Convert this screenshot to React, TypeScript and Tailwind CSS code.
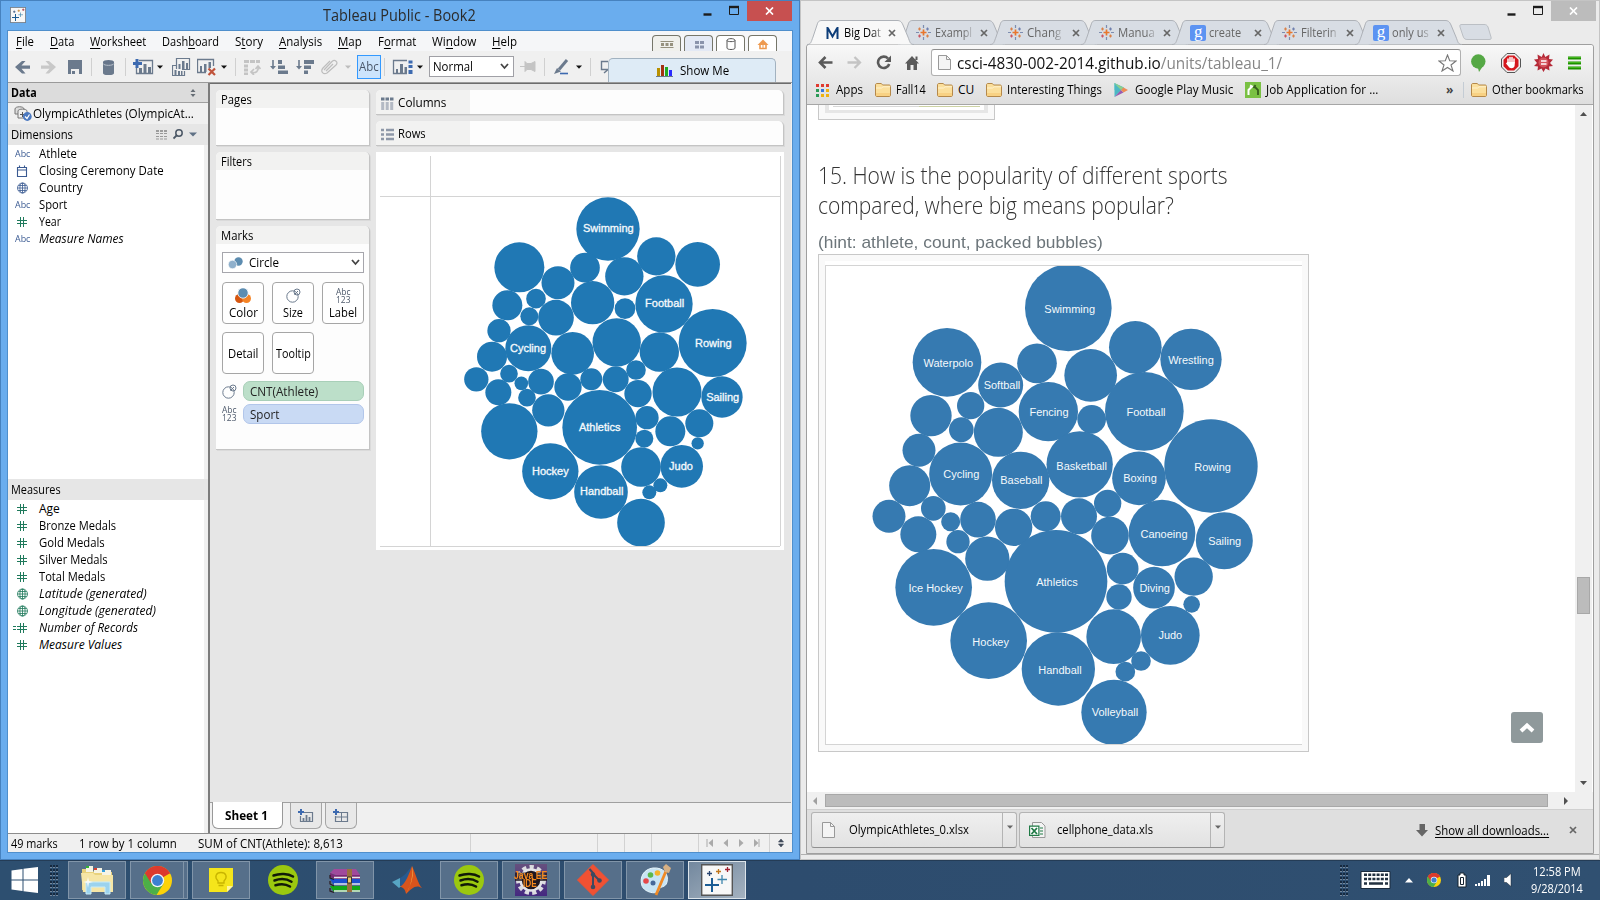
import { useLayoutEffect, useRef, useState } from "react";
import type { ReactNode } from "react";

/* One line of text condensed or widened to a given width. */
function T({ w, className = "", children }: { w: number; className?: string; children: ReactNode }) {
  const ref = useRef<HTMLSpanElement>(null);
  const [scale, setScale] = useState(1);
  useLayoutEffect(() => {
    if (ref.current) setScale(w / ref.current.offsetWidth);
  }, [w]);
  return (
    <span className={`block shrink-0 whitespace-nowrap ${className}`} style={{ width: w }}>
      <span ref={ref} className="inline-block origin-left" style={{ transform: `scaleX(${scale})` }}>
        {children}
      </span>
    </span>
  );
}

/* Drawing whose view box starts at x, y. */
function G({ x = 0, y = 0, w, h, className = "", children }: { x?: number; y?: number; w: number; h: number; className?: string; children: ReactNode }) {
  return (
    <svg width={w} height={h} viewBox={`${x} ${y} ${w} ${h}`} fill="none" className={`block shrink-0 ${className}`}>
      {children}
    </svg>
  );
}

type Bubble = [number, number, number, string?, number?, number?];

const leftBubbles: Bubble[] = [
  [474, 147, 95, "Swimming", 475, 145], [208, 262, 75], [324, 308, 49.5], [405, 263, 44.5], [523, 289, 57.5], [619, 229, 57.5],
  [743, 253, 67], [642, 372, 86, "Football", 644, 370], [428, 368, 65], [258, 356, 29.5], [238, 409, 27], [172, 376, 45],
  [318, 413, 53.5], [525, 386, 31], [788, 489, 102, "Rowing", 790, 490], [147, 452, 35], [126, 530, 45], [235, 505, 69, "Cycling", 234, 505],
  [368, 520, 64], [500, 487, 72.5], [628, 516, 59], [79, 598, 36.5], [145, 637, 39], [177, 581, 26.5], [214, 610, 20.5], [231, 653, 26.5],
  [273, 605, 38.5], [354, 621, 41], [295, 691, 48.5], [424, 598, 33], [497, 598, 39], [558, 570, 29.5], [564, 641, 41], [681, 636, 73.5],
  [816, 651, 62, "Sailing", 818, 652], [449, 742, 112, "Athletics", 449, 742], [178, 754, 84.5], [591, 713, 35], [583, 776, 27],
  [661, 754, 45], [748, 730, 42], [743, 790, 18.5], [573, 861, 59.5], [695, 859, 64, "Judo", 693, 859], [301, 874, 84.5, "Hockey", 301, 874],
  [453, 936, 80.5, "Handball", 455, 934], [598, 937, 21], [631, 916, 21], [573, 1028, 71.5],
];

const rightBubbles: Bubble[] = [
  [625, 174, 130, "Swimming", 629, 178], [261, 337, 103, "Waterpolo", 265, 340], [422, 405, 67.5, "Softball", 426, 406], [531, 340, 59.5],
  [692, 376, 79], [826, 292, 79], [993, 328, 92, "Wrestling", 993, 331], [853, 484, 118, "Football", 858, 487], [565, 485, 89, "Fencing", 567, 487],
  [332, 467, 41], [304, 539, 37], [213, 497, 62], [415, 547, 73.5], [695, 508, 43], [1053, 648, 140, "Rowing", 1058, 652], [177, 601, 49.5],
  [149, 707, 61.5], [302, 672, 94.5, "Cycling", 304, 673], [482, 691, 86, "Baseball", 484, 691], [659, 643, 99.5, "Basketball", 665, 649],
  [837, 685, 80.5, "Boxing", 840, 685], [87, 799, 49.5], [175, 853, 54], [220, 775, 37], [272, 815, 28.5], [294, 875, 35], [354, 809, 53.5],
  [461, 832, 56], [382, 926, 66.5], [557, 799, 45], [657, 799, 54], [743, 760, 41], [750, 857, 56.5], [906, 849, 100, "Canoeing", 912, 853],
  [1093, 872, 85.5, "Sailing", 1094, 874], [588, 994, 154, "Athletics", 591, 997], [221, 1012, 115, "Ice Hockey", 227, 1015], [788, 956, 47.5],
  [777, 1041, 38], [882, 1013, 62.5, "Diving", 884, 1015], [1001, 980, 57.5], [995, 1063, 25], [761, 1160, 82], [931, 1156, 88, "Judo", 931, 1156],
  [386, 1172, 115, "Hockey", 392, 1177], [595, 1257, 110, "Handball", 600, 1261], [796, 1265, 29.5], [843, 1233, 29.5], [762, 1387, 98, "Volleyball", 765, 1387],
];

function Bubbles({ data, fill, bold }: { data: Bubble[]; fill: string; bold?: boolean }) {
  return (
    <g>
      {data.map(([cx, cy, r], i) => <circle key={i} cx={cx} cy={cy} r={r} fill={fill} />)}
      {data.filter((d) => d[3]).map((d) => (
        <text key={d[3]} x={d[4]} y={(d[5] ?? 0) + 12} textAnchor="middle" fontSize={33} fill="#f4f9fc" stroke={bold ? "#f4f9fc" : "none"} strokeWidth={bold ? 1 : 0} className="font-['Liberation_Sans',sans-serif]">
          {d[3]}
        </text>
      ))}
    </g>
  );
}

const menus: [string, string, string, number, string][] = [
  ["", "F", "ile", 18, "w-[34px]"], ["", "D", "ata", 24, "w-[40px]"], ["", "W", "orksheet", 56, "w-[72px]"], ["Dash", "b", "oard", 57, "w-[73px]"],
  ["S", "t", "ory", 28, "w-[44px]"], ["", "A", "nalysis", 43, "w-[59px]"], ["", "M", "ap", 24, "w-[40px]"], ["F", "o", "rmat", 38, "w-[54px]"],
  ["Wi", "n", "dow", 44, "w-[60px]"], ["", "H", "elp", 25, "w-[40px]"],
];

const Sep = ({ className }: { className: string }) => <div className={`h-[18px] w-px shrink-0 bg-[#d0d0d0] ${className}`} />;
const Caret = ({ className, c = "#111" }: { className: string; c?: string }) => (
  <G w={6} h={4} className={className}><path d="M0 .5H6L3 3.8Z" fill={c} /></G>
);

function Toolbar() {
  const s = "#6b7a8d";
  return (
    <div className="flex h-[31px] items-center bg-[#f0f0f0] pl-[7px]">
      <G x={15} y={59} w={15} h={16}><path d="M30 65.4H21.5L25.5 61H22L15 67L22 73.5H25.5L21.5 68.8H30Z" fill={s} /></G>
      <G x={41} y={59} w={15} h={16} className="ml-[11px]"><path d="M41 65.4H49.5L45.5 61H49L56 67L49 73.5H45.5L49.5 68.8H41Z" fill="#c8c8c8" /></G>
      <G x={68} y={59} w={14} h={16} className="ml-3"><path d="M68 60H82V74H68Z" fill={s} /><path d="M71 69H79V74H71Z" fill="#eee" /><path d="M72 71h3v3h-3z" fill={s} /></G>
      <Sep className="ml-[9px]" />
      <G x={103} y={58} w={12} h={16} className="ml-[11px]"><path d="M103 61V72C103 75 114 75 114 72V61Z" fill={s} /><ellipse cx={108.5} cy={61} rx={5.5} ry={2} fill="#66758a" /><path d="M103 62.5C104 65 113 65 114 62.5" stroke="#b5bdc8" /></G>
      <Sep className="ml-[10px]" />
      <G x={133} y={58} w={21} h={18} className="ml-[7px]">
        <path d="M139 60.5H152.5V73.5H136.500V67" stroke={s} strokeWidth={1.3} /><path d="M139 68h3v5h-3zM143.500 64h3v9h-3zM148 67h3v6h-3z" fill={s} /><path d="M137 59V68M133 63.500H142" stroke="#3d6ab0" strokeWidth={3} />
      </G>
      <Caret className="ml-[3px]" />
      <G x={172} y={57} w={19} h={20} className="ml-[9px]">
        <path d="M176.500 69V58.500H189.500V69.500H182" stroke={s} strokeWidth={1.200} /><path d="M178.500 64v5h2v-5zM182 61v8h2.500v-8zM186 63v6h2v-6z" fill={s} />
        <path d="M176 65.500H172.500V75.500H184.500V71" stroke={s} strokeWidth={1.200} /><path d="M174.500 70v5h2v-5zM178 71v4h2v-4zM181 71v4h1.500v-4z" fill={s} />
      </G>
      <G x={197} y={58} w={19} h={19} className="ml-[6px]">
        <path d="M206 73.500H197.500V60.500H213.500V67" stroke={s} strokeWidth={1.300} /><path d="M200 67h2v6h-2zM204 65h2.500v8h-2.500zM208.500 63h2.500v6h-2.500z" fill={s} /><path d="M208.500 69.500L215 76M215 69.500L208.500 76" stroke="#c0533b" strokeWidth={2.200} />
      </G>
      <Caret className="ml-[5px]" />
      <Sep className="ml-2" />
      <G x={244} y={59} w={17} h={16} className="ml-2">
        <path d="M244 61.500H260M244 66H248M244 70H248M244 74H248" stroke="#c4c4c4" strokeWidth={3} strokeDasharray="5 1" /><path d="M251 72C256 74 259 71 258 66M254 69L251 72L254 75M255.500 69L258 66L260.500 69" stroke="#c4c4c4" strokeWidth={1.700} />
      </G>
      <G x={270} y={59} w={18} h={16} className="ml-[9px]"><path d="M273 60V68" stroke={s} strokeWidth={1.600} /><path d="M270 66H276L273 69.500Z" fill={s} /><path d="M278 60h4v4h-4zM278 65.500h7v3.500h-7zM278 70.500h10v3.500h-10z" fill={s} /></G>
      <G x={296} y={59} w={18} h={16} className="ml-2"><path d="M299 60V68" stroke={s} strokeWidth={1.600} /><path d="M296 66H302L299 69.500Z" fill={s} /><path d="M304 60h10v4h-10zM304 65.500h7v3.500h-7zM304 70.500h4v3.500h-4z" fill={s} /></G>
      <G x={321} y={59} w={17} h={16} className="ml-[7px]"><path d="M324 70L332 61.500C335 59 338.500 62 336 65L327 73C323.500 75 320 71.500 323 68L330 61M326 71L333 64" stroke="#bdbdbd" strokeWidth={1.200} /></G>
      <Caret className="ml-[7px]" c="#bdbdbd" />
      <div className="ml-[6px] flex h-6 w-6 items-center justify-center border border-[#3399ff] bg-[#cce4fc] text-[12px] text-[#4a5668]"><T w={20}>Abc</T></div>
      <Sep className="ml-[3px]" />
      <G x={392} y={59} w={21} h={16} className="ml-[7px]"><path d="M407 60.500H393.500V73.500H407" stroke={s} strokeWidth={1.300} /><path d="M396 69h2v5h-2zM400 64h3v10h-3zM404.500 67h2.500v7h-2.500z" fill={s} /><path d="M408.500 60.500h4v3h-4zM408.500 65h4v3h-4zM408.500 70h4v4h-4z" fill="#3d6ab0" /></G>
      <Caret className="ml-1" />
      <div className="ml-[6px] flex h-[21px] w-[85px] items-center border border-[#a0a0a6] bg-white pl-[3px] text-[12px] text-black">
        <T w={40}>Normal</T>
        <G w={9} h={7} className="ml-[27px]"><path d="M1 1L4.500 5L8 1" stroke="#444" strokeWidth={1.800} /></G>
      </div>
      <G x={520} y={60} w={16} h={14} className="ml-[6px]"><path d="M520 66.500H525M525 61.500V71.500L527 69.500H531L535 71.500V61.500L531 63.500H527Z" fill="#c4c4c4" stroke="#c4c4c4" /></G>
      <Sep className="ml-2" />
      <G x={554} y={59} w={16} h={16} className="ml-[9px]"><path d="M567 60L559 69.500" stroke={s} strokeWidth={3} /><path d="M557 68L561 71.500L554 74Z" fill={s} /><path d="M560 73.500H568" stroke="#3d6ab0" strokeWidth={1.600} /></G>
      <Caret className="ml-[6px]" />
      <Sep className="ml-2" />
      <G x={600} y={59} w={8} h={16} className="ml-[9px]"><path d="M608 61.500H601.500V69.500H608M604 73L608 69.500" stroke={s} strokeWidth={1.400} /></G>
      <div className="flex h-6 w-[168px] items-center self-end rounded-t-[5px] border border-b-0 border-[#a2b2c0] bg-[#deebf6] text-[12px]">
        <G x={656} y={64} w={17} h={13} className="ml-[47px]"><path d="M657 68h3v8h-3z" fill="#b89000" /><path d="M661 65h3v11h-3z" fill="#a33210" /><path d="M665 67h3v9h-3z" fill="#22aa22" /><path d="M669 70h3v6h-3z" fill="#2a2aff" /><path d="M656 76.500H673" stroke="#6b7a8d" /></G>
        <T w={49} className="ml-[7px]">Show Me</T>
      </div>
    </div>
  );
}

function FieldIcon({ kind }: { kind: string }) {
  if (kind === "abc") return <T w={15} className="ml-[7px] mr-[9px] text-[9.500px] font-medium text-[#3a5a92]">Abc</T>;
  const green = kind !== "globe" && kind !== "date";
  const c = green ? "#1f7a5c" : "#3a5a92";
  return (
    <G w={15} h={14} className="ml-[5px] mr-[11px]">
      {kind === "date" && <path d="M4.500 3.500H13.500V12.500H4.500ZM4.500 6H13.500M6.500 1.500V3.500M11.500 1.500V3.500" stroke={c} strokeWidth={1.100} />}
      {kind.endsWith("globe") && <g stroke={c} strokeWidth={0.800}><circle cx={9.500} cy={7} r={5} /><path d="M9.500 2V12M4.500 7H14.500M5.500 4.500H13.500M5.500 9.500H13.500" /><ellipse cx={9.500} cy={7} rx={2.600} ry={5} /></g>}
      {kind.endsWith("num") && <path d="M7.500 2V12M10.500 2V12M4 5.500H14M4 8.500H14" stroke={c} strokeWidth={1} />}
      {kind === "geqnum" && <path d="M0 5.500H3M0 8.500H3" stroke={c} strokeWidth={1} />}
    </G>
  );
}

const dims: [string, string, number, boolean?][] = [
  ["abc", "Athlete", 38], ["date", "Closing Ceremony Date", 125], ["globe", "Country", 44], ["abc", "Sport", 28], ["gnum", "Year", 22], ["abc", "Measure Names", 85, true],
];
const measures: [string, string, number, boolean?][] = [
  ["gnum", "Age", 21], ["gnum", "Bronze Medals", 77], ["gnum", "Gold Medals", 66], ["gnum", "Silver Medals", 69], ["gnum", "Total Medals", 66],
  ["gglobe", "Latitude (generated)", 108, true], ["gglobe", "Longitude (generated)", 117, true], ["geqnum", "Number of Records", 99, true], ["gnum", "Measure Values", 83, true],
];

function Fields({ items }: { items: [string, string, number, boolean?][] }) {
  return (
    <div className="w-[196px] bg-white">
      {items.map(([k, label, w, it]) => (
        <div key={label} className="flex h-[17px] items-center leading-[17px]">
          <FieldIcon kind={k} />
          <T w={w} className={it ? "italic" : ""}>{label}</T>
        </div>
      ))}
    </div>
  );
}

function SizeIcon() {
  return <G w={15} h={15}><circle cx={6.500} cy={8.500} r={5.700} stroke="#6b7a8d" /><circle cx={11} cy={4} r={3} stroke="#6b7a8d" /><path d="M8.500 6.500L12 3" stroke="#6b7a8d" /></G>;
}
function AbcStack() {
  return <T w={15} className="text-[9px] font-medium leading-[8px] text-[#4d596b]">Abc<br />123</T>;
}

const card = "rounded-t-[5px] border-b border-r border-[#c4c4c4] bg-[#fdfdfd] shadow-[1px_1px_0_#dadada]";
const cardHead = "h-[18px] rounded-t-[5px] bg-[#f2f2f1] pl-[5px] leading-[20px]";
const markBtn = "flex h-[42px] w-[42px] flex-col items-center rounded-[4px] border border-[#a6a6a6] bg-white";

function TableauIcon({ size, className = "" }: { size: number; className?: string }) {
  return (
    <svg width={size} height={size} viewBox="0 0 32 32" fill="none" className={`block shrink-0 ${className}`}>
      <path d="M.7 .7H31.300V31.300H.7Z" fill="#f7f7f7" stroke="#555" strokeWidth={1.400} />
      <path d="M11 14V28M4 21H18" stroke="#1b5c94" strokeWidth={2} /><path d="M21 11V20M16.500 15.500H26" stroke="#3f86ad" strokeWidth={1.300} />
      <path d="M8.500 7V12M6 9.500H11" stroke="#2a4570" strokeWidth={1.300} /><path d="M17.500 5V10M15 7.500H20" stroke="#c0761b" strokeWidth={1.300} /><path d="M26.500 3V8M24 5.500H29" stroke="#a02030" strokeWidth={1.300} />
    </svg>
  );
}

function WindowButtons({ close }: { close: string }) {
  return (
    <>
      <G w={9} h={12} className="mt-[5px]"><path d="M.5 9.500H8.500" stroke="#1c1c1c" strokeWidth={2.400} /></G>
      <G w={11} h={12} className="ml-[17px] mt-[5px]"><path d="M.5 2V9.500H9.500V2" stroke="#1c1c1c" /><path d="M0 2H10" stroke="#1c1c1c" strokeWidth={2.400} /></G>
      <div className={`ml-[7px] mt-px flex h-5 w-[45px] items-center justify-center ${close}`}>
        <G w={9} h={8}><path d="M1 .5L8 7.500M8 .5L1 7.500" stroke="#fff" strokeWidth={1.700} /></G>
      </div>
    </>
  );
}

function Tableau() {
  const status = "h-[18px] border-l border-[#d2d2d2]";
  return (
    <div className="flex h-[860px] w-[800px] flex-col border border-[#4682bf] bg-[#6aadee] text-[12px] text-black">
      <div className="flex h-[29px] shrink-0">
        <TableauIcon size={16} className="ml-[9px] mt-[6px]" />
        <T w={153} className="ml-[297px] mt-[2px] text-[15.500px] leading-6 text-[#2b2b2b]">Tableau Public - Book2</T>
        <div className="-mt-px ml-[227px] flex"><WindowButtons close="bg-[#c75050]" /></div>
      </div>
      <div className="ml-[6px] flex w-[786px] grow flex-col border border-[#4f8fcc] bg-[#f0f0f0]">
        <div className="flex h-[20px] shrink-0 bg-[#f5f6f8] pl-2">
          {menus.map(([a, u, b, w, cls]) => (
            <div key={u + b} className={`${cls} shrink-0 leading-[22px]`}><T w={w}>{a}<span className="underline underline-offset-2">{u}</span>{b}</T></div>
          ))}
          <div className="ml-auto mr-[15px] flex gap-[3px] self-end">
            {[0, 1, 2, 3].map((i) => (
              <div key={i} className={`flex h-4 w-[29px] items-center justify-center rounded-t-[4px] border border-b-0 border-[#76766a] ${i === 0 ? "bg-[#f0f0ec]" : i === 1 ? "bg-[#e3e9f5]" : "bg-white"}`}>
                <G w={14} h={12}>
                  {i === 0 && <g><path d="M.5 3.500H13.500M.5 9.500H13.500" stroke="#96917e" /><path d="M1 5h3v3H1zM5.500 5h3v3h-3zM10 5h3v3h-3z" fill="#96917e" /></g>}
                  {i === 1 && <path d="M3 3h4v3H3zM8 3h4v3H8zM3 7.500h4v3H3zM8 7.500h4v3H8z" fill="#8a93ab" />}
                  {i === 2 && <path d="M3 2.500V10C3 12 11 12 11 10V2.500C11 0 3 0 3 2.500C3 4 11 4 11 2.500" stroke="#555" />}
                  {i === 3 && <g><path d="M1.500 7L7 1.500L12.500 7Z" fill="#ee9a50" /><path d="M4 7V10.500H10V7" stroke="#ee9a50" strokeWidth={1.600} /><path d="M7 7v4" stroke="#ee9a50" /></g>}
                </G>
              </div>
            ))}
          </div>
        </div>
        <Toolbar />
        <div className="h-px shrink-0 bg-[#9a9a9a]" />
        <div className="flex h-[750px] shrink-0">
          <div className="flex w-[200px] flex-col bg-[#f0f0f0]">
            <div className="flex h-5 items-center border-b border-[#a0a0a0] bg-[#dcdcdc] pl-[3px] font-bold"><T w={26}>Data</T><G w={7} h={8} className="ml-[153px]"><path d="M.5 3H5.500L3 0ZM.5 5H5.500L3 8Z" fill="#666d75" /></G></div>
            <div className="flex h-[21px] items-center pl-[6px]">
              <G w={18} h={15}><path d="M1 3C1 0 10 0 10 3V8H1Z" fill="#ddd" stroke="#777" /><path d="M4 5C4 2.500 13 2.500 13 5V12H4Z" fill="#eee" stroke="#777" /><path d="M6 8.500H11M8.500 6V11" stroke="#555" /><circle cx={13.300} cy={10.500} r={4.400} fill="#4a78c0" /><path d="M11 10.500L13 12.500L15.500 8.500" stroke="#fff" strokeWidth={1.200} /></G>
              <T w={161} className="ml-[1px]">OlympicAthletes (OlympicAt...</T>
            </div>
            <div className="flex h-[21px] shrink-0 items-center bg-[#e6e6e6] pl-[3px]">
              <T w={62}>Dimensions</T>
              <G w={13} h={10} className="ml-[83px]"><path d="M0 1H12" stroke="#555" strokeDasharray="3 1" strokeWidth={1.200} /><path d="M0 3.500H12M0 6.500H12M0 9H12" stroke="#999" strokeDasharray="3 1" /></G>
              <G w={11} h={11} className="ml-1"><circle cx={6} cy={4} r={3.200} stroke="#4c5866" strokeWidth={1.500} /><path d="M4 6L.5 9.500" stroke="#4c5866" strokeWidth={1.800} /></G>
              <G w={8} h={5} className="ml-[5px]"><path d="M0 .5H8L4 4.500Z" fill="#5f7185" /></G>
            </div>
            <div className="h-[334px] w-[196px] shrink-0 bg-white"><Fields items={dims} /></div>
            <div className="h-[21px] shrink-0 bg-[#e6e6e6] pl-[3px] leading-[22px]"><T w={50}>Measures</T></div>
            <div className="w-[196px] grow bg-white"><Fields items={measures} /></div>
          </div>
          <div className="w-[2px] shrink-0 bg-[#7c7c7c]" />
          <div className="flex h-[749px] w-[581px] flex-col border-t border-[#6c6c6c] bg-[#e6e6e6]">
            <div className="flex grow pl-[6px] pt-[6px]">
              <div className="flex w-[154px] shrink-0 flex-col gap-[6px]">
                <div className={`h-[56px] ${card}`}><div className={cardHead}><T w={31}>Pages</T></div></div>
                <div className={`h-[68px] ${card}`}><div className={cardHead}><T w={31}>Filters</T></div></div>
                <div className={`h-[224px] ${card}`}>
                  <div className={cardHead}><T w={32}>Marks</T></div>
                  <div className="flex h-[205px] flex-col pl-[6px] pt-[8px]">
                    <div className="flex h-[21px] w-[142px] shrink-0 items-center border border-[#a6a6ac] bg-white pl-[5px]">
                      <G w={15} h={12}><circle cx={10.500} cy={4.500} r={4.200} fill="#5c8cb0" /><circle cx={4.500} cy={7.500} r={4.200} fill="#8fb0cc" stroke="#fff" strokeWidth={.6} /></G>
                      <T w={30} className="ml-[6px]">Circle</T>
                      <G w={9} h={7} className="ml-[72px]"><path d="M1 1L4.500 5L8 1" stroke="#444" strokeWidth={1.800} /></G>
                    </div>
                    <div className="mt-[9px] flex gap-2">
                      <div className={markBtn}><G w={16} h={15} className="mt-[5px]"><circle cx={4.500} cy={10.500} r={4.500} fill="#d6560f" /><circle cx={11.500} cy={10.500} r={4.500} fill="#f58426" /><circle cx={8} cy={5} r={5.200} fill="#5d8db1" stroke="#fff" strokeWidth={.8} /></G><T w={29} className="leading-[20px]">Color</T></div>
                      <div className={markBtn}><div className="mt-[5px]"><SizeIcon /></div><T w={20} className="leading-[20px]">Size</T></div>
                      <div className={markBtn}><div className="mt-[5px] flex h-[15px]"><AbcStack /></div><T w={28} className="leading-[20px]">Label</T></div>
                    </div>
                    <div className="mt-2 flex gap-2">
                      <div className={`${markBtn} justify-center pt-[2px]`}><T w={30}>Detail</T></div>
                      <div className={`${markBtn} justify-center pt-[2px]`}><T w={35}>Tooltip</T></div>
                    </div>
                    <div className="mt-[7px] flex h-5 items-center"><SizeIcon /><div className="ml-[6px] h-5 w-[121px] rounded-[7px] border border-[#a8cfb8] bg-[#bcdfc9] pl-[6px] leading-[20px] text-[#222]"><T w={68}>CNT(Athlete)</T></div></div>
                    <div className="mt-[3px] flex h-5 items-center"><AbcStack /><div className="ml-[6px] h-5 w-[121px] rounded-[7px] border border-[#b2c6ea] bg-[#c9daf4] pl-[6px] leading-[20px] text-[#222]"><T w={29}>Sport</T></div></div>
                  </div>
                </div>
              </div>
              <div className="ml-[6px] flex w-[408px] flex-col">
                {["Columns", "Rows"].map((n, i) => (
                  <div key={n} className={`flex h-[25px] shrink-0 ${card} ${i ? "mt-[6px]" : ""}`}>
                    <div className="flex w-[94px] items-center rounded-tl-[5px] bg-[#f2f2f1] pl-[5px] pt-[2px]">
                      <G w={14} h={13}>{i ? <path d="M0 2H3M0 6.500H3M0 11H3M5 2H13M5 6.500H13M5 11H13" stroke="#8e98a8" strokeWidth={2.600} /> : <g><path d="M0 2H13" stroke="#6b7a8d" strokeWidth={3} strokeDasharray="3.500 1" /><path d="M1.700 5V13M6.200 5V13M10.700 5V13" stroke="#b4bac4" strokeWidth={3} /></g>}</G>
                      <T w={i ? 28 : 48} className="ml-[3px]">{n}</T>
                    </div>
                  </div>
                ))}
                <G x={376} y={152} w={408} h={398} className="mt-[6px] bg-white">
                  <path d="M430.500 156V546M380 196.500H780M780.500 156V546M380 546.500H780" stroke="#d4d4d4" />
                  <clipPath id="plot"><path d="M380 190H780V546H380Z" /></clipPath>
                  <g clipPath="url(#plot)"><g transform="translate(450 180) scale(.33333)"><Bubbles data={leftBubbles} fill="#2078b4" bold /></g></g>
                </G>
              </div>
            </div>
            <div className="flex h-[30px] shrink-0 border-t border-[#a0a0a0] bg-[#f0f0f0] pl-[2px]">
              <div className="-mt-px h-[27px] w-[71px] rounded-b-[6px] border border-t-0 border-[#999] bg-white font-bold leading-[27px]"><T w={43} className="ml-[12px]">Sheet 1</T></div>
              {[0, 1].map((i) => (
                <div key={i} className={`flex h-[26px] w-8 items-center justify-center rounded-b-[6px] border border-t-0 border-[#a6a6a6] bg-[#e8e8e8] ${i ? "ml-[3px]" : "ml-[7px]"}`}>
                  <G w={16} h={14}><path d="M6 3.500H14.500V12.500H2.500V7" stroke="#6b7a8d" strokeWidth={1.200} />{i ? <path d="M3 8H14.500M8.500 4V12" stroke="#6b7a8d" /> : <path d="M5.500 9V12M8.500 6V12M11.500 8V12" stroke="#6b7a8d" strokeWidth={1.800} />}<path d="M3 0V6M0 3H6" stroke="#3d6ab0" strokeWidth={2} /></G>
                </div>
              ))}
            </div>
          </div>
        </div>
        <div className="flex h-[19px] shrink-0 border-t border-[#8c8c8c] leading-[19px]">
          <T w={47} className="ml-[3px]">49 marks</T><T w={98} className="ml-[21px]">1 row by 1 column</T><T w={145} className="ml-[21px]">SUM of CNT(Athlete): 8,613</T>
          <div className={`ml-[127px] w-[127px] ${status}`} /><div className={`w-[27px] ${status}`} /><div className={`w-[27px] ${status}`} /><div className={`w-[47px] ${status}`} />
          <div className={`flex w-[71px] items-center ${status}`}>
            <G w={60} h={8} className="ml-[7px]"><path d="M1 0V8M53 0V8" stroke="#aaa" /><path d="M7 0V8L2.500 4ZM22 0V8L17.500 4ZM33 0V8L37.500 4ZM48 0V8L52.500 4Z" fill="#aaa" /></G>
          </div>
          <div className={`flex items-center pl-2 ${status}`}><G w={6} h={8}><path d="M.5 3H5.500L3 0ZM.5 5H5.500L3 8Z" fill="#404a5a" stroke="#404a5a" strokeWidth={.6} /></G></div>
        </div>
      </div>
      <div className="h-[7px] shrink-0" />
    </div>
  );
}

function Burst() {
  return (
    <G w={15} h={15}>
      <path d="M7.500 4.500V10.500M4.500 7.500H10.500" stroke="#e8762c" strokeWidth={1.700} /><path d="M7.500 0V3M7.500 12V15M0 7.500H3M12 7.500H15" stroke="#7d8db0" strokeWidth={1.200} />
      <path d="M3.500 2.500V5.500M2 4H5M11.500 9.500V12.500M10 11H13" stroke="#d98048" strokeWidth={1.200} /><path d="M11.500 2.500V5.500M10 4H13" stroke="#6e7fae" strokeWidth={1.200} /><path d="M3.500 9.500V12.500M2 11H5" stroke="#c95563" strokeWidth={1.200} />
    </G>
  );
}
const GoogleIcon = () => <div className="flex h-4 w-4 items-center justify-center rounded-[2px] bg-[#5c93f2] pb-[3px] font-['Liberation_Serif',serif] text-[17px] leading-none text-white">g</div>;
const Close = ({ className = "" }: { className?: string }) => <G w={8} h={8} className={className}><path d="M1 1L7 7M7 1L1 7" stroke="#666" strokeWidth={1.700} /></G>;
const Folder = ({ className }: { className: string }) => (
  <G w={16} h={14} className={className}><path d="M.5 12V2C.5 1 1 .5 2 .5H6C7 .5 7 2 8 2H14C15 2 15.500 2.500 15.500 3.500V12C15.500 13 15 13.500 14 13.500H2C1 13.500 .5 13 .5 12Z" fill="#fbdf9c" stroke="#b5894a" /><path d="M1 5H6.500L8 3.800H15" stroke="#fff2cf" /><path d="M1 10H15V13H1Z" fill="#f7c873" opacity={.6} /></G>
);
const Doc = ({ h = 15 }: { h?: number }) => <G w={13} h={16}><path d={`M.5 .5H8.500L12.500 4.500V${h}.5H.5Z`} fill="#f4f4f4" stroke="#999" /><path d="M8.500 .5V4.500H12.500" stroke="#999" /></G>;

const tabs: [string, string, number][] = [
  ["burst", "Exampl", 37], ["burst", "Chang", 34], ["burst", "Manua", 37], ["google", "create", 32], ["burst", "Filterin", 36], ["google", "only us", 37],
];

function Tab({ active, children }: { active?: boolean; children: ReactNode }) {
  return (
    <div className={`relative h-[25px] w-[107px] shrink-0 ${active ? "z-10" : "-ml-[15.700px]"}`}>
      <svg width={107} height={25} viewBox="0 0 107 25" className="absolute inset-0"><path d="M0 24.500C4 24.500 4 22 6 17L10 5C11 1.500 12 .5 15 .5H90C93 .5 94.500 1.500 96 5L101 17C103 22 103 24.500 107 24.500" fill={active ? "#f8f8f8" : "#d8dde4"} stroke="#aeb2b8" /></svg>
      <div className="relative flex h-[25px] items-center">{children}</div>
    </div>
  );
}

const fade = "mask-r-from-75% mask-r-to-110%";

function Chrome() {
  return (
    <div className="flex h-[860px] w-[800px] flex-col border border-[#c4c4c4] bg-[#ebebeb] text-[12px] text-black">
      <div className="-mt-px flex h-[21px] shrink-0 justify-end pr-[3px]"><WindowButtons close="bg-[#bcbcbc]" /></div>
      <div className="-mt-px flex h-6 shrink-0 pl-[6px]">
        <Tab active>
          <G w={13} h={12} className="ml-[19px]"><path d="M1.500 12V0M1.500 .5L6.500 9.500L11.500 .5M11.500 12V0" stroke="#0c3c78" strokeWidth={2} /></G>
          <T w={37} className={`ml-[5px] ${fade}`}>Big Dat</T><Close className="ml-[7px]" />
        </Tab>
        {tabs.map(([k, label, w]) => (
          <Tab key={label}>
            <div className="ml-[18px] flex w-[19px]">{k === "burst" ? <Burst /> : <GoogleIcon />}</div>
            <div className="w-[45px]"><T w={w} className={`text-[#666] ${k === "google" && w < 35 ? "" : fade}`}>{label}</T></div>
            <Close />
          </Tab>
        ))}
        <G w={33} h={17} className="ml-[-3px] mt-[4px]"><path d="M3 .5H25C27 .5 28 1 29 3L32 13C32.500 15 32 15.500 30 15.500H9C6 15.500 5 15 4 12L1 3C.5 1 1 .5 3 .5Z" fill="#d8dde4" stroke="#bbbfc4" /></G>
      </div>
      <div className="ml-[5px] flex w-[788px] grow flex-col rounded-t-[3px] border border-[#9f9f9f] bg-white">
        <div className="h-[60px] shrink-0 rounded-t-[3px] border-b border-[#a6a6a6] bg-linear-to-b from-[#f8f8f8] to-[#dedede]">
          <div className="flex h-[35px] items-center">
            <G w={15} h={13} className="ml-[11px]"><path d="M14.500 6.500H2M7.500 1L2 6.500L7.500 12" stroke="#5a5a5a" strokeWidth={2.600} /></G>
            <G w={15} h={13} className="ml-[14px]"><path d="M.5 6.500H13M7.500 1L13 6.500L7.500 12" stroke="#c4c4c4" strokeWidth={2.300} /></G>
            <G w={15} h={15} className="ml-[14px]"><path d="M12 3.500A5.700 5.700 0 1 0 13.200 9" stroke="#5a5a5a" strokeWidth={2.600} /><path d="M15 .5V7H8.500Z" fill="#5a5a5a" /></G>
            <G w={14} h={16} className="ml-[14px]"><path d="M0 8.500L7 1L14 8.500H12V15H8.500V10H5.500V15H2V8.500ZM10.500 1.500H12.500V5H10.500Z" fill="#5a5a5a" /></G>
            <div className="ml-[12px] flex h-[27px] w-[530px] items-center rounded-[3px] border border-[#b0b0b0] border-t-[#8e8e8e] bg-white">
              <div className="ml-[6px]"><Doc h={14} /></div>
              <T w={325} className="ml-[6px] text-[15.500px] leading-6 text-[#111]">csci-4830-002-2014.github.io<span className="text-[#868686]">/units/tableau_1/</span></T>
              <G w={19} h={18} className="ml-[156px]"><path d="M9.500 1L11.700 6.700L18 7L13 11L15 17L9.500 13.500L4 17L6 11L1 7L7.300 6.700Z" stroke="#777" strokeWidth={1.100} /></G>
            </div>
            <G w={15} h={18} className="ml-[10px]"><circle cx={7.300} cy={7.500} r={7.200} fill="#55a845" /><path d="M6.500 12H12L8 18Z" fill="#55a845" /></G>
            <G w={20} h={20} className="ml-[15px]"><path d="M6 .5H14L19.500 6V14L14 19.500H6L.5 14V6Z" fill="#eee" stroke="#555" /><path d="M6.800 2.500H13.200L17.500 6.800V13.200L13.200 17.500H6.800L2.500 13.200V6.800Z" fill="#d5171d" /><path d="M7 10V6M9 9V4.500M11 9V4.500M13 10V6" stroke="#fff" strokeWidth={1.500} strokeLinecap="round" /><path d="M6.300 9H13.700V12C13.700 16 8.500 16 7.500 13.500L5 10.500Z" fill="#fff" /></G>
            <G w={19} h={19} className="ml-[13px]"><path d="M9.500 0L11.300 4L15.500 1.500L15 6L19 6.500L16 10L19 13L15 13.500L15.500 17.500L11.500 15.500L9.500 19L7.500 15.500L3.500 17.500L4 13.500L0 13L3 10L0 6.500L4 6L3.500 1.500L7.700 4Z" fill="#b52a38" /><circle cx={9.500} cy={9.500} r={5} fill="#d4535c" /><path d="M7 8H12.500M7 11H12.500" stroke="#fff" strokeWidth={1.300} /></G>
            <G w={13} h={14} className="ml-[15px]"><path d="M0 2H13M0 7H13M0 12H13" stroke="#1d8f00" strokeWidth={3} /><path d="M0 1.500H13M0 6.500H13M0 11.500H13" stroke="#43b81c" strokeWidth={1} /></G>
          </div>
          <div className="flex h-[20px] items-center pl-[9px]">
            <G w={13} h={13}>{["#e03a2f", "#e03a2f", "#e03a2f", "#2b9a57", "#3478e0", "#eeb211", "#2b9a57", "#eeb211", "#eeb211"].map((c, i) => <rect key={i} x={(i % 3) * 5} y={Math.floor(i / 3) * 5} width={3} height={3} fill={c} />)}</G>
            <T w={27} className="ml-[7px]">Apps</T>
            <Folder className="ml-3" /><T w={30} className="ml-[5px]">Fall14</T>
            <Folder className="ml-[11px]" /><T w={16} className="ml-[5px]">CU</T>
            <Folder className="ml-[12px]" /><T w={95} className="ml-[5px]">Interesting Things</T>
            <G w={14} h={14} className="ml-[12px]"><path d="M.5 0V7L7.500 7Z" fill="#5fd0c0" /><path d="M.5 0L10 4.500L.5 14Z" fill="#4cb8c4" /><path d="M0 0L9.500 4.500L7 7Z" fill="#8fd08a" /><path d="M.5 14L9.500 9.500L7 7Z" fill="#9a5cb0" /><path d="M9.500 4.500L14 7L9.500 9.500L7 7Z" fill="#ee8b55" /></G>
            <T w={98} className="ml-[7px]">Google Play Music</T>
            <G w={16} h={16} className="ml-[12px]"><path d="M0 0H16V16H0Z" fill="#7ac143" /><path d="M3.500 13V8L7 4.500L5 3.500" stroke="#fff" strokeWidth={2} /><path d="M9.500 4.500L13 8V13M10.500 3L8.500 6" stroke="#365e1c" strokeWidth={1.800} /></G>
            <T w={112} className="ml-[5px]">Job Application for ...</T>
            <T w={7} className="ml-[68px] font-bold text-[#444]">»</T>
            <div className="ml-[10px] h-4 w-px bg-[#c4ccd4]" />
            <Folder className="ml-[7px]" /><T w={92} className="ml-[5px]">Other bookmarks</T>
          </div>
        </div>
        <div className="flex h-[687px] shrink-0">
          <div className="flex w-[768px] flex-col pl-[11px]">
            <div className="h-[15px] w-[177px] border border-t-0 border-[#c8c8c8] bg-[#f9f9f9] px-[6px]"><div className="h-2 bg-[#e6e6e6] px-[4px]"><div className="h-[5px] bg-white px-[4px] pt-px"><div className="flex h-px justify-end bg-[#d8d8d8]"><div className="h-px w-[61px] bg-[#cdd3a4]" /></div></div></div></div>
            <div className="mt-[40px] text-[24px] font-light leading-[30px] text-[#333] font-['Open_Sans',sans-serif]">
              <T w={410}>15. How is the popularity of different sports</T>
              <T w={356}>compared, where big means popular?</T>
            </div>
            <T w={285} className="mt-[11px] font-['Liberation_Sans',sans-serif] text-[17px] leading-6 text-[#6c757a]">(hint: athlete, count, packed bubbles)</T>
            <div className="-mt-px h-[498px] w-[491px] shrink-0 border border-[#c8c8c8] bg-[#f9f9f9] p-[6px]">
              <G x={825} y={261} w={477} h={484} className="bg-white">
                <path d="M825 265.500H1302M825 744.500H1302M825.500 265V745" stroke="#d4d4d4" />
                <clipPath id="sheet"><path d="M826 266H1302V744H826Z" /></clipPath>
                <g clipPath="url(#sheet)"><g transform="translate(860 250) scale(.33333)"><Bubbles data={rightBubbles} fill="#367ab1" /></g></g>
              </G>
            </div>
            <div className="-mt-[40px] ml-auto mr-[32px] flex h-[31px] w-8 items-center justify-center rounded-[3px] bg-[#8f999b]"><G w={16} h={12}><path d="M2 9L8 3.500L14 9" stroke="#fff" strokeWidth={4} /></G></div>
          </div>
          <div className="flex w-[17px] flex-col items-center bg-[#f0f0f0]">
            <G w={7} h={4} className="mt-[7px]"><path d="M0 4H7L3.500 0Z" fill="#505050" /></G>
            <div className="mt-[461px] h-[37px] w-[13px] border border-[#a8a8a8] bg-[#bcbcbc]" />
            <G w={7} h={4} className="mt-[167px]"><path d="M0 0H7L3.500 4Z" fill="#505050" /></G>
          </div>
        </div>
        <div className="flex h-[17px] shrink-0 items-center bg-[#f0f0f0] pl-[6px]">
          <G w={4} h={8}><path d="M4 0V8L0 4Z" fill="#a0a0a0" /></G>
          <div className="ml-[8px] h-[13px] w-[723px] border border-[#a8a8a8] bg-[#bcbcbc]" />
          <G w={4} h={8} className="ml-4"><path d="M0 0V8L4 4Z" fill="#505050" /></G>
        </div>
        <div className="flex grow border-t border-[#d0d0d0] bg-[#dfdfdf] pl-1 pt-[2px]">
          {["OlympicAthletes_0.xlsx", "cellphone_data.xls"].map((n, i) => (
            <div key={n} className={`flex h-9 w-[206px] items-center rounded-[3px] border border-[#b4b4b4] border-b-[#909090] bg-linear-to-b from-[#efefef] to-[#e2e2e2] ${i ? "ml-[2px]" : ""}`}>
              <div className="ml-[10px] w-[17px]">{i ? (
                <G w={17} h={16} className="-ml-px"><path d="M3.500 .5H12.500L16 4V15.500H3.500Z" fill="#f4f4f4" stroke="#999" /><path d="M11 6H14M11 9H14M11 12H14" stroke="#1f7a45" /><path d="M.6 4.100H9.900V13.400H.6Z" fill="#fff" stroke="#1f7a45" strokeWidth={1.200} /><path d="M2.500 6L8 12M8 6L2.500 12" stroke="#1f7a45" strokeWidth={1.800} /></G>
              ) : <Doc />}</div>
              <T w={i ? 96 : 120} className="ml-[10px]">{n}</T>
              <div className="ml-auto flex h-full w-[14px] justify-center border-l border-[#b4b4b4] pt-3"><Caret className="" c="#666" /></div>
            </div>
          ))}
          <G w={12} h={13} className="ml-[191px] mt-[12px]"><path d="M3.500 0H9V6H12L6 12.500L0 6H3.500Z" fill="#666" /></G>
          <T w={114} className="ml-[7px] mt-[9px] leading-[20px]"><span className="underline underline-offset-2">Show all downloads...</span></T>
          <Close className="ml-[20px] mt-[14px]" />
        </div>
      </div>
      <div className="h-[5px] shrink-0 border-t border-[#b0b0b0]" />
    </div>
  );
}

function ChromeLogo({ size }: { size: number }) {
  return (
    <svg width={size} height={size} viewBox="0 0 28 28">
      <circle cx={14} cy={14} r={14} fill="#fcd209" /><path d="M14 14L1.900 7A14 14 0 0 1 26.100 7Z" fill="#dc3a2e" /><path d="M14 14L1.900 7A14 14 0 0 0 13 28L20 17Z" fill="#4caf48" /><path d="M14 7H26.100A14 14 0 0 0 1.900 7L8 17Z" fill="#dc3a2e" />
      <circle cx={14} cy={14} r={6.500} fill="#f4f4f4" /><circle cx={14} cy={14} r={5.200} fill="#3d80d0" />
    </svg>
  );
}
const Spotify = () => <G w={32} h={32}><circle cx={16} cy={16} r={15} fill="#9bc80f" /><path d="M6.500 11.500C13 9 21 9.500 26 12.500M7.500 16.500C13 14.500 20 15 24.500 17.700M8.500 21.300C13 19.800 19 20 23 22.500" stroke="#111a08" strokeWidth={2.500} strokeLinecap="round" /></G>;

const apps: [string, string][] = [
  ["explorer", "w-[58px]"], ["chrome", "ml-1 w-[54px]"], ["keep", "ml-[8px] w-[58px]"], ["spotify", "ml-1 w-[58px]"], ["rar", "ml-1 w-[58px]"],
  ["matlab", "ml-1 w-[58px]"], ["spotify", "ml-1 w-[58px]"], ["java", "ml-1 w-[58px]"], ["git", "ml-1 w-[58px]"], ["paint", "ml-1 w-[58px]"], ["tableau", "ml-1 w-[58px]"],
];

function AppIcon({ n }: { n: string }) {
  if (n === "chrome") return <ChromeLogo size={29} />;
  if (n === "spotify") return <Spotify />;
  if (n === "tableau") return <TableauIcon size={32} />;
  if (n === "java") return (
    <div className="relative h-8 w-8 bg-linear-to-b from-[#66507e] to-[#452880] text-left font-['Liberation_Sans',sans-serif] text-[10px] font-bold text-[#f58a1f]">
      <G w={32} h={32}><circle cx={16} cy={16} r={13} stroke="#dcdce0" strokeWidth={4} strokeDasharray="4.200 3.230" /><circle cx={16} cy={16} r={10.500} fill="#201820" stroke="#e4e4e8" strokeWidth={2.500} /><path d="M0 8.500H32V17H0Z" fill="#201820" opacity={.75} /></G>
      <div className="absolute -left-px top-[8px] leading-[8px]"><T w={33}>Java EE</T><T w={14} className="ml-[9px]">IDE</T></div>
    </div>
  );
  return (
    <G w={32} h={32}>
      {n === "explorer" && <g><path d="M1 5H11L13 8H31V26H1Z" fill="#e9d27c" /><path d="M5 2H12V8H5ZM13 4H21V9H13ZM21 6H30V11H21Z" fill="#f6f4e4" /><path d="M5 2h3v2H5z" fill="#31b431" /><path d="M13 4h3v2h-3z" fill="#d84030" /><path d="M21 6h3v2h-3z" fill="#38a0dc" /><path d="M0 9H12L14 11H32V28H2Z" fill="#f6e6a6" /><path d="M5 30V18H29V30H24V23H10V30Z" fill="#9cd3ee" stroke="#c9ecf8" /><path d="M7 13L8 17L12 18L8 19L7 24L6 19L2 18L6 17Z" fill="#fff" opacity={.8} /></g>}
      {n === "keep" && <g><path d="M4 4H28V22L22 28H4Z" fill="#f5e51b" /><path d="M28 22L22 28V22Z" fill="#fff59a" /><path d="M13 19V17C9 13 11 8.500 16 8.500C21 8.500 23 13 19 17V19ZM13.500 21.500H18.500" stroke="#c8b400" strokeWidth={1.300} /></g>}
      {n === "rar" && <g><path d="M5 5H27L31 11H7L1 9Z" fill="#a04a9c" /><path d="M1 9L6 11H31V15H6L1 13Z" fill="#7a2a76" /><path d="M1 15H31V21H5Z" fill="#1c50d0" /><path d="M1 22H31V28H5Z" fill="#12a818" /><path d="M5 13.500H31M5 20H31M5 27H31" stroke="#e8e8e8" strokeWidth={1.300} /><path d="M1 11V14L5 15.500M1 17V20L5 22M1 24V27L5 28.500" stroke="#2a1a20" strokeWidth={1.200} /><path d="M18 5H23V28H18Z" fill="#9a7040" /><path d="M18.500 13H22.500V19H18.500Z" fill="#efc968" stroke="#333" /></g>}
      {n === "matlab" && <g><path d="M1 18L9 14L15 18L8 24Z" fill="#57a5c4" /><path d="M9 14C15 11 18 5 21 2L14 22L9 22Z" fill="#285a90" /><path d="M21 2C24 8 27 20 31 24C25 20 21 24 15 30C14 25 12 23 9 23C15 19 18 10 21 2Z" fill="#d9541c" /><path d="M21 2C23 11 21 19 15 30C20 22 22 12 21 2Z" fill="#f8bd4d" /></g>}
      {n === "git" && <g><path d="M16 .5L31.500 16L16 31.500L.5 16Z" fill="#f05133" stroke="#f05133" strokeLinejoin="round" /><path d="M12.500 5L16 9V23M16 10L22 16" stroke="#3e4a60" strokeWidth={2} /><circle cx={16} cy={10.500} r={2.200} fill="#3e4a60" /><circle cx={22.500} cy={16.500} r={2.300} fill="#3e4a60" /><circle cx={16} cy={23} r={2.300} fill="#3e4a60" /></g>}
      {n === "paint" && <g><path d="M14 4C25 3 30 11 28 18C27 24 20 22 20 26C19 31 6 29 3 22C0 13 5 5 14 4Z" fill="#c8e4f4" stroke="#e8f6fc" /><circle cx={7} cy={17} r={2.800} fill="#e5484a" /><circle cx={11.500} cy={11} r={2.800} fill="#5cb84a" /><circle cx={18.500} cy={9} r={2.800} fill="#f4b32c" /><circle cx={14} cy={19} r={2.500} fill="#46689a" /><path d="M27 7L17 31" stroke="#f08a25" strokeWidth={2.800} /><path d="M24 3L27 0L32 4L30 9L26 8Z" fill="#d6b084" /></g>}
    </G>
  );
}

const Grip = () => (
  <G w={9} h={31}>{[0, 4, 8, 12, 16, 20, 24, 28].map((y) => <g key={y}><path d={`M0 ${y + 1}H8`} stroke="#16293f" strokeWidth={2} strokeDasharray="2 1" /><path d={`M0 ${y + 2.500}H8`} stroke="#73879c" strokeWidth={1} strokeDasharray="2 1" /></g>)}</G>
);

function Taskbar() {
  return (
    <div className="flex h-10 items-center border-t border-[#243c56] bg-linear-to-r from-[#2d4f70] via-[#2d4c6e] to-[#305071] pb-px">
      <G w={27} h={26} className="ml-[11px]"><path d="M.5 3.500L11.500 2V12.500H.5ZM12.500 1.800L27 0V12.500H12.500ZM.5 13.500H11.500V24L.5 22.500ZM12.500 13.500H27V26L12.500 24.200Z" fill="#fff" /></G>
      <div className="ml-[12px] mr-[9px]"><Grip /></div>
      {apps.map(([n, cls], i) => {
        const plain = n === "matlab" || i === 3;
        return (
          <div key={i} className={`relative flex h-[38px] shrink-0 items-center justify-center ${cls} ${plain ? "" : n === "tableau" ? "border border-[#dce4ea] bg-linear-to-br from-[#73889e] to-[#a4b2c0]" : "border border-[#8195a9] bg-[#566f8a]"}`}>
            <AppIcon n={n} />
            {n === "chrome" && <div className="absolute -right-[5px] -top-px h-[38px] w-[4px] border border-l-0 border-[#8195a9] bg-[#566f8a]" />}
          </div>
        );
      })}
      <div className="ml-auto flex items-center pr-[17px] text-white">
        <Grip />
        <G w={31} h={20} className="ml-[11px]"><path d="M1 1.500H30V18.500H1Z" fill="#fff" stroke="#1a2a3c" /><path d="M4 4.800H28M4 9H28" stroke="#22303f" strokeWidth={2.600} strokeDasharray="3 1.200" /><path d="M4 13.500H7M9 13.500H23M25 13.500H28" stroke="#22303f" strokeWidth={2.500} /></G>
        <G w={8} h={5} className="ml-[14px]"><path d="M0 4.500H8L4 0Z" fill="#fff" /></G>
        <div className="ml-[14px]"><ChromeLogo size={14} /></div>
        <G w={10} h={16} className="ml-[16px]"><path d="M1 3H3V1H7V3H9V15H1Z" fill="#fff" stroke="#15222f" /><path d="M3.500 5.500H6.500V12.500H3.500Z" stroke="#15222f" fill="#fff" /></G>
        <G w={16} h={13} className="ml-[8px]"><path d="M0 12V10H2V12ZM3 12V9H5V12ZM6 12V7H8V12ZM9 12V5H11V12ZM12 12V1H15V12Z" fill="#fff" /></G>
        <G w={8} h={14} className="ml-[13px]"><path d="M0 4.500H2.500L7 .5V13.500L2.500 9.500H0Z" fill="#fff" stroke="#15222f" strokeWidth={.5} /></G>
        <div className="ml-[18px] flex w-[53px] flex-col items-center text-[12px] leading-[17px]"><T w={48}>12:58 PM</T><T w={52}>9/28/2014</T></div>
      </div>
    </div>
  );
}

export default function App() {
  return (
    <div className="h-[900px] w-[1600px] overflow-hidden bg-[#2d4c6e] font-['Open_Sans','Noto_Sans',sans-serif]">
      <div className="flex"><Tableau /><Chrome /></div>
      <Taskbar />
    </div>
  );
}
